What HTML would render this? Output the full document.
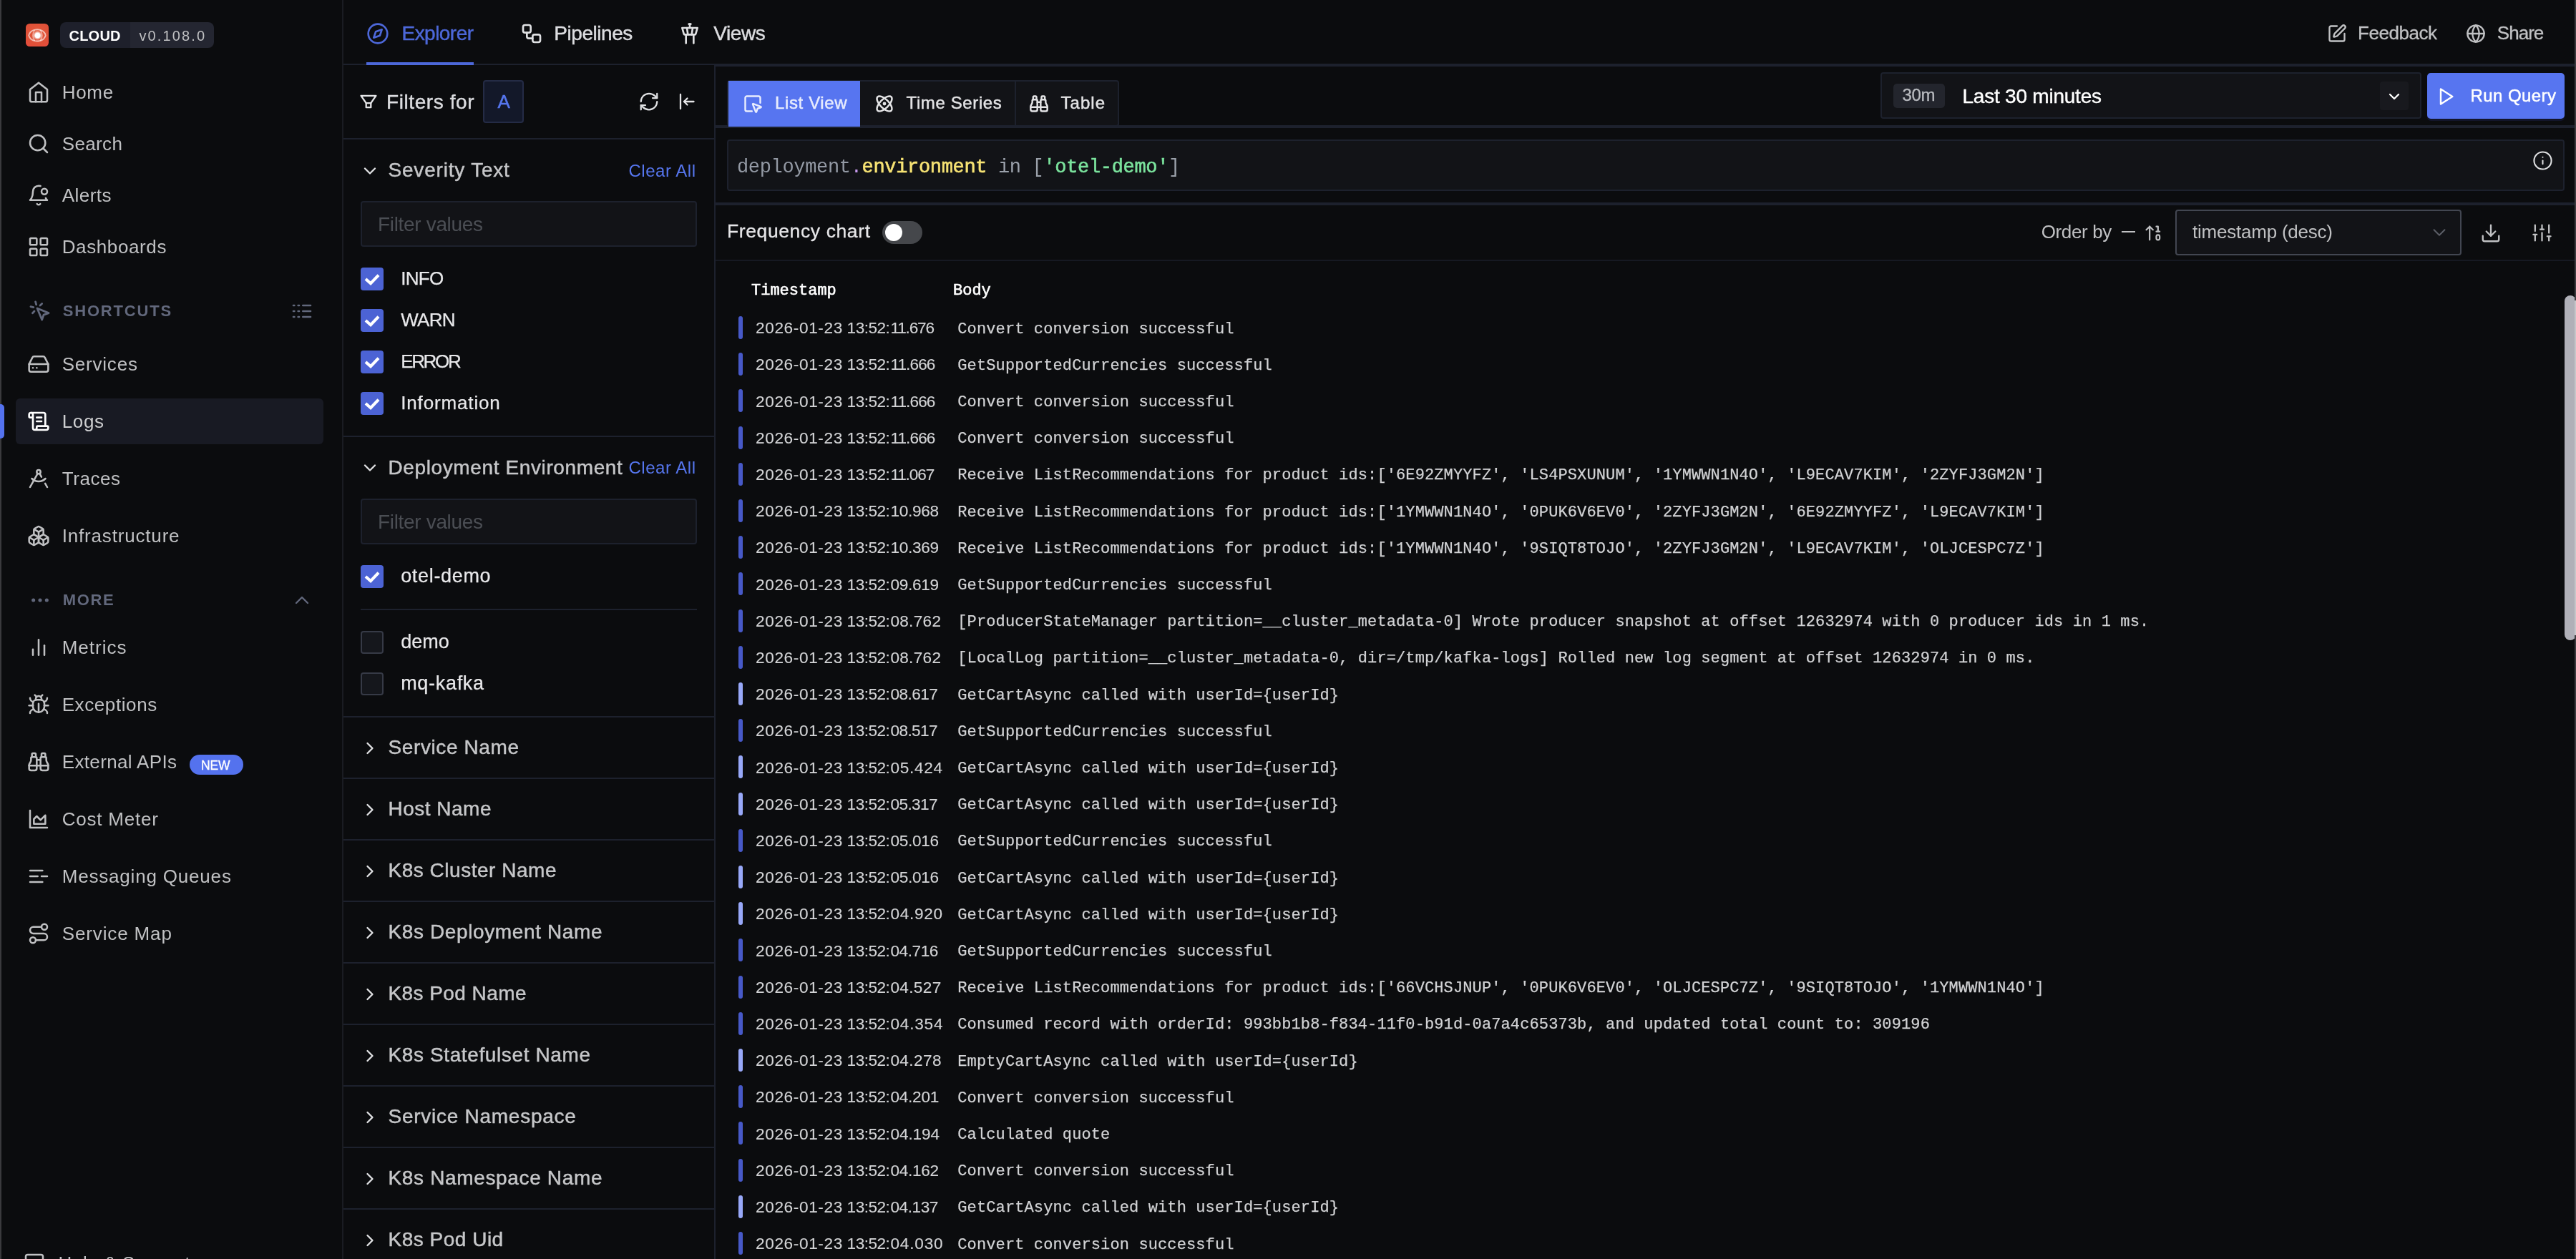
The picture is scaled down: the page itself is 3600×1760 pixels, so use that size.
<!DOCTYPE html>
<html><head><meta charset="utf-8"><title>SigNoz | Logs Explorer</title>
<style>
html,body{margin:0;padding:0;background:#0b0c0e;}
body{width:3600px;height:1760px;position:relative;overflow:hidden;font-family:"Liberation Sans",sans-serif;}
#root{position:absolute;left:0;top:0;width:3600px;height:1760px;will-change:transform;transform:translateZ(0);}
.a{position:absolute;}
.t{white-space:pre;}
.m{font-family:"Liberation Mono",monospace;}
svg{overflow:visible;}
</style></head><body><div id="root">
<div class="a" style="left:0px;top:0px;width:2px;height:1760px;background:#3a3a3d;"></div>
<div class="a" style="left:478px;top:0px;width:2px;height:1760px;background:#1a1c22;"></div>
<svg class="a" style="left:36px;top:33px" width="32" height="32" viewBox="0 0 32 32"><defs><radialGradient id="lg" cx="0.5" cy="0.4" r="0.8"><stop offset="0" stop-color="#e35a3a"/><stop offset="0.65" stop-color="#df5038"/><stop offset="1" stop-color="#ec4a40"/></radialGradient><filter id="bl" x="-30%" y="-30%" width="160%" height="160%"><feGaussianBlur stdDeviation="0.55"/></filter><filter id="bl2" x="-50%" y="-50%" width="200%" height="200%"><feGaussianBlur stdDeviation="0.9"/></filter></defs><rect width="32" height="32" rx="5.5" fill="url(#lg)"/><g filter="url(#bl)" fill="none" stroke="#fff" stroke-linecap="round"><path d="M4.2 16.4 C5.5 11 10.5 8.3 16 8.3 C21.5 8.3 26.5 11 27.8 16.4 C26.5 21.8 21.5 24.5 16 24.5 C10.5 24.5 5.5 21.8 4.2 16.4Z" stroke-opacity="0.62" stroke-width="1.9" stroke-dasharray="5 1.2"/><path d="M12.2 9.5 C9.2 13 9.2 19.8 12.2 23.3" stroke-opacity="0.45" stroke-width="1.7"/><path d="M20.6 9.5 C23.6 13 23.6 19.8 20.6 23.3" stroke-opacity="0.45" stroke-width="1.7"/></g><circle cx="16.5" cy="16.5" r="5" fill="#fff" filter="url(#bl2)"/><circle cx="16.5" cy="16.5" r="3.6" fill="#fff"/></svg>
<div class="a" style="left:84px;top:31px;width:98px;height:36px;background:#1e202b;border-radius:8px 0 0 8px;"></div>
<div class="a" style="left:182px;top:31px;width:117px;height:36px;background:#242631;border-radius:0 8px 8px 0;"></div>
<div class="a t" style="left:96.5px;top:35.70px;line-height:28px;font-size:20px;color:#ffffff;font-weight:700;letter-spacing:0.224px;">CLOUD</div>
<div class="a t" style="left:194.5px;top:35.70px;line-height:28px;font-size:20px;color:#c0c1c3;letter-spacing:2.110px;">v0.108.0</div>
<svg class="a" style="left:38px;top:112.5px;" width="32" height="32" viewBox="0 0 24 24" fill="none" stroke="#c0c1c3" stroke-width="1.9" stroke-linecap="round" stroke-linejoin="round"><path d="m3 9 9-7 9 7v11a2 2 0 0 1-2 2H5a2 2 0 0 1-2-2z"/><polyline points="9 22 9 12 15 12 15 22"/></svg>
<div class="a t" style="left:86.7px;top:110.70px;line-height:36px;font-size:26px;color:#c0c1c3;letter-spacing:0.714px;">Home</div>
<svg class="a" style="left:38px;top:184.5px;" width="32" height="32" viewBox="0 0 24 24" fill="none" stroke="#c0c1c3" stroke-width="1.9" stroke-linecap="round" stroke-linejoin="round"><circle cx="11" cy="11" r="8"/><path d="m21 21-4.3-4.3"/></svg>
<div class="a t" style="left:86.7px;top:182.70px;line-height:36px;font-size:26px;color:#c0c1c3;letter-spacing:0.363px;">Search</div>
<svg class="a" style="left:38px;top:256.5px;" width="32" height="32" viewBox="0 0 24 24" fill="none" stroke="#c0c1c3" stroke-width="1.9" stroke-linecap="round" stroke-linejoin="round"><path d="M19.4 14.9C20.2 16.4 21 17 21 17H3s3-2 3-9c0-3.3 2.7-6 6-6 .7 0 1.3.1 1.9.3"/><path d="M10.3 21a1.94 1.94 0 0 0 3.4 0"/><circle cx="18" cy="8" r="3"/></svg>
<div class="a t" style="left:86.7px;top:254.70px;line-height:36px;font-size:26px;color:#c0c1c3;letter-spacing:0.467px;">Alerts</div>
<svg class="a" style="left:38px;top:328.5px;" width="32" height="32" viewBox="0 0 24 24" fill="none" stroke="#c0c1c3" stroke-width="1.9" stroke-linecap="round" stroke-linejoin="round"><rect width="7" height="7" x="3" y="3" rx="1"/><rect width="7" height="7" x="14" y="3" rx="1"/><rect width="7" height="7" x="14" y="14" rx="1"/><rect width="7" height="7" x="3" y="14" rx="1"/></svg>
<div class="a t" style="left:86.7px;top:326.70px;line-height:36px;font-size:26px;color:#c0c1c3;letter-spacing:0.611px;">Dashboards</div>
<svg class="a" style="left:40px;top:418.5px;" width="32" height="32" viewBox="0 0 24 24" fill="none" stroke="#62687c" stroke-width="2.1" stroke-linecap="round" stroke-linejoin="round"><path d="m9 9 5 12 1.8-5.2L21 14Z"/><path d="M7.2 2.2 8 5.1"/><path d="m5.1 8-2.9-.8"/><path d="M14 4.1 12 6"/><path d="m6 12-1.9 2"/></svg>
<div class="a t" style="left:87.7px;top:418.80px;line-height:31px;font-size:22px;color:#62687c;font-weight:700;letter-spacing:1.826px;">SHORTCUTS</div>
<svg class="a" style="left:406.3px;top:419.2px;" width="32" height="32" viewBox="0 0 24 24" fill="none" stroke="#62687c" stroke-width="2" stroke-linecap="round" stroke-linejoin="round"><path d="M13 12h8"/><path d="M13 18h8"/><path d="M13 6h8"/><path d="M3 12h1"/><path d="M3 18h1"/><path d="M3 6h1"/><path d="M8 12h1"/><path d="M8 18h1"/><path d="M8 6h1"/></svg>
<svg class="a" style="left:38px;top:492.5px;" width="32" height="32" viewBox="0 0 24 24" fill="none" stroke="#c0c1c3" stroke-width="1.9" stroke-linecap="round" stroke-linejoin="round"><line x1="22" x2="2" y1="12" y2="12"/><path d="M5.45 5.11 2 12v6a2 2 0 0 0 2 2h16a2 2 0 0 0 2-2v-6l-3.45-6.89A2 2 0 0 0 16.76 4H7.24a2 2 0 0 0-1.79 1.11z"/><line x1="6" x2="6.01" y1="16" y2="16"/><line x1="10" x2="10.01" y1="16" y2="16"/></svg>
<div class="a t" style="left:86.7px;top:490.70px;line-height:36px;font-size:26px;color:#c0c1c3;letter-spacing:0.786px;">Services</div>
<div class="a" style="left:22px;top:557px;width:430px;height:64px;background:#181a23;border-radius:6px;"></div>
<div class="a" style="left:0px;top:565px;width:6px;height:48px;background:#5472ee;border-radius:0 5px 5px 0;"></div>
<svg class="a" style="left:38px;top:572.5px;" width="32" height="32" viewBox="0 0 24 24" fill="none" stroke="#ffffff" stroke-width="2" stroke-linecap="round" stroke-linejoin="round"><path d="M15 12h-5"/><path d="M15 8h-5"/><path d="M19 17V5a2 2 0 0 0-2-2H4"/><path d="M8 21h12a2 2 0 0 0 2-2v-1a1 1 0 0 0-1-1H11a1 1 0 0 0-1 1v1a2 2 0 1 1-4 0V5a2 2 0 1 0-4 0v2a1 1 0 0 0 1 1h3"/></svg>
<div class="a t" style="left:86.7px;top:570.70px;line-height:36px;font-size:26px;color:#cdced0;letter-spacing:0.640px;">Logs</div>
<svg class="a" style="left:38px;top:652.5px;" width="32" height="32" viewBox="0 0 24 24" fill="none" stroke="#c0c1c3" stroke-width="1.9" stroke-linecap="round" stroke-linejoin="round"><path d="m12.99 6.74 1.93 3.44"/><path d="M19.136 12a10 10 0 0 1-14.271 0"/><path d="m21 21-2.16-3.84"/><path d="m3 21 8.02-14.26"/><circle cx="12" cy="5" r="2"/></svg>
<div class="a t" style="left:86.7px;top:650.70px;line-height:36px;font-size:26px;color:#c0c1c3;letter-spacing:0.580px;">Traces</div>
<svg class="a" style="left:38px;top:732.5px;" width="32" height="32" viewBox="0 0 24 24" fill="none" stroke="#c0c1c3" stroke-width="1.9" stroke-linecap="round" stroke-linejoin="round"><path d="M2.97 12.92A2 2 0 0 0 2 14.63v3.24a2 2 0 0 0 .97 1.71l3 1.8a2 2 0 0 0 2.06 0L12 19v-5.5l-5-3-4.03 2.42Z"/><path d="m7 16.5-4.74-2.85"/><path d="m7 16.5 5-3"/><path d="M7 16.5v5.17"/><path d="M12 13.5V19l3.97 2.38a2 2 0 0 0 2.06 0l3-1.8a2 2 0 0 0 .97-1.71v-3.24a2 2 0 0 0-.97-1.71L17 10.5l-5 3Z"/><path d="m17 16.5-5-3"/><path d="m17 16.5 4.74-2.85"/><path d="M17 16.5v5.17"/><path d="M7.97 4.42A2 2 0 0 0 7 6.13v4.37l5 3 5-3V6.13a2 2 0 0 0-.97-1.71l-3-1.8a2 2 0 0 0-2.06 0l-3 1.8Z"/><path d="M12 8 7.26 5.15"/><path d="m12 8 4.74-2.85"/><path d="M12 13.5V8"/></svg>
<div class="a t" style="left:86.7px;top:730.70px;line-height:36px;font-size:26px;color:#c0c1c3;letter-spacing:0.825px;">Infrastructure</div>
<svg class="a" style="left:40px;top:823px;" width="32" height="32" viewBox="0 0 24 24" fill="none" stroke="#62687c" stroke-width="1.8" stroke-linecap="round" stroke-linejoin="round"><circle cx="12" cy="12" r="1"/><circle cx="19" cy="12" r="1"/><circle cx="5" cy="12" r="1"/></svg>
<div class="a t" style="left:87.7px;top:822.80px;line-height:31px;font-size:22px;color:#62687c;font-weight:700;letter-spacing:1.666px;">MORE</div>
<svg class="a" style="left:406px;top:823px;" width="32" height="32" viewBox="0 0 24 24" fill="none" stroke="#62687c" stroke-width="1.8" stroke-linecap="round" stroke-linejoin="round"><path d="m18 15-6-6-6 6"/></svg>
<svg class="a" style="left:38px;top:888.5px;" width="32" height="32" viewBox="0 0 24 24" fill="none" stroke="#c0c1c3" stroke-width="1.9" stroke-linecap="round" stroke-linejoin="round"><line x1="18" x2="18" y1="20" y2="10"/><line x1="12" x2="12" y1="20" y2="4"/><line x1="6" x2="6" y1="20" y2="14"/></svg>
<div class="a t" style="left:86.7px;top:886.70px;line-height:36px;font-size:26px;color:#c0c1c3;letter-spacing:1.004px;">Metrics</div>
<svg class="a" style="left:38px;top:968.5px;" width="32" height="32" viewBox="0 0 24 24" fill="none" stroke="#c0c1c3" stroke-width="1.9" stroke-linecap="round" stroke-linejoin="round"><path d="m8 2 1.88 1.88"/><path d="M14.12 3.88 16 2"/><path d="M9 7.13v-1a3.003 3.003 0 1 1 6 0v1"/><path d="M12 20c-3.3 0-6-2.7-6-6v-3a4 4 0 0 1 4-4h4a4 4 0 0 1 4 4v3c0 3.3-2.7 6-6 6"/><path d="M12 20v-9"/><path d="M6.53 9C4.6 8.8 3 7.1 3 5"/><path d="M6 13H2"/><path d="M3 21c0-2.1 1.7-3.9 3.8-4"/><path d="M20.97 5c0 2.1-1.6 3.8-3.5 4"/><path d="M22 13h-4"/><path d="M17.2 17c2.1.1 3.8 1.9 3.8 4"/></svg>
<div class="a t" style="left:86.7px;top:966.70px;line-height:36px;font-size:26px;color:#c0c1c3;letter-spacing:0.591px;">Exceptions</div>
<svg class="a" style="left:38px;top:1048.5px;" width="32" height="32" viewBox="0 0 24 24" fill="none" stroke="#c0c1c3" stroke-width="1.9" stroke-linecap="round" stroke-linejoin="round"><path d="M10 10h4"/><path d="M19 7V4a1 1 0 0 0-1-1h-2a1 1 0 0 0-1 1v3"/><path d="M20 21a2 2 0 0 0 2-2v-3.851c0-1.39-2-2.962-2-4.829V8a1 1 0 0 0-1-1h-4a1 1 0 0 0-1 1v11a2 2 0 0 0 2 2z"/><path d="M22 16H2"/><path d="M4 21a2 2 0 0 1-2-2v-3.851c0-1.39 2-2.962 2-4.829V8a1 1 0 0 1 1-1h4a1 1 0 0 1 1 1v11a2 2 0 0 1-2 2z"/><path d="M9 7V4a1 1 0 0 0-1-1H6a1 1 0 0 0-1 1v3"/></svg>
<div class="a t" style="left:86.7px;top:1046.70px;line-height:36px;font-size:26px;color:#c0c1c3;letter-spacing:0.360px;">External APIs</div>
<div class="a" style="left:265px;top:1055px;width:75px;height:28px;background:#5472ee;border-radius:14px;"></div>
<div class="a t" style="left:281px;top:1057.60px;line-height:24px;font-size:17.5px;color:#ffffff;letter-spacing:-0.164px;-webkit-text-stroke:0.3px #ffffff;">NEW</div>
<svg class="a" style="left:38px;top:1128.5px;" width="32" height="32" viewBox="0 0 24 24" fill="none" stroke="#c0c1c3" stroke-width="1.9" stroke-linecap="round" stroke-linejoin="round"><path d="M3 3v18h18"/><path d="M7 12v5h12V8l-5 5-4-4Z"/></svg>
<div class="a t" style="left:86.7px;top:1126.70px;line-height:36px;font-size:26px;color:#c0c1c3;letter-spacing:0.784px;">Cost Meter</div>
<svg class="a" style="left:38px;top:1208.5px;" width="32" height="32" viewBox="0 0 24 24" fill="none" stroke="#c0c1c3" stroke-width="1.9" stroke-linecap="round" stroke-linejoin="round"><path d="M11 12H3"/><path d="M16 6H3"/><path d="M16 18H3"/><path d="M21 12h-6"/></svg>
<div class="a t" style="left:86.7px;top:1206.70px;line-height:36px;font-size:26px;color:#c0c1c3;letter-spacing:0.812px;">Messaging Queues</div>
<svg class="a" style="left:38px;top:1288.5px;" width="32" height="32" viewBox="0 0 24 24" fill="none" stroke="#c0c1c3" stroke-width="1.9" stroke-linecap="round" stroke-linejoin="round"><circle cx="6" cy="19" r="3"/><path d="M9 19h8.5a3.5 3.5 0 0 0 0-7h-11a3.5 3.5 0 0 1 0-7H15"/><circle cx="18" cy="5" r="3"/></svg>
<div class="a t" style="left:86.7px;top:1286.70px;line-height:36px;font-size:26px;color:#c0c1c3;letter-spacing:0.870px;">Service Map</div>
<svg class="a" style="left:31.7px;top:1750.3px;" width="32" height="32" viewBox="0 0 24 24" fill="none" stroke="#c0c1c3" stroke-width="1.9" stroke-linecap="round" stroke-linejoin="round"><path d="M21 15a2 2 0 0 1-2 2H7l-4 4V5a2 2 0 0 1 2-2h14a2 2 0 0 1 2 2z"/></svg>
<div class="a t" style="left:81.5px;top:1748.00px;line-height:36px;font-size:26px;color:#c0c1c3;letter-spacing:0.590px;">Help &amp; Support</div>
<div class="a" style="left:480px;top:89px;width:3120px;height:2px;background:#1d212d;"></div>
<svg class="a" style="left:512px;top:31px;" width="32" height="32" viewBox="0 0 24 24" fill="none" stroke="#4d68d9" stroke-width="2" stroke-linecap="round" stroke-linejoin="round"><path d="m16.24 7.76-2.12 6.36-6.36 2.12 2.12-6.36 6.36-2.12z"/><circle cx="12" cy="12" r="10"/></svg>
<div class="a t" style="left:561.5px;top:27.00px;line-height:39px;font-size:28px;color:#4d68d9;letter-spacing:-0.538px;-webkit-text-stroke:0.45px #4d68d9;">Explorer</div>
<div class="a" style="left:512px;top:87px;width:150px;height:4px;background:#4d68d9;"></div>
<svg class="a" style="left:727px;top:31px;" width="32" height="32" viewBox="0 0 24 24" fill="none" stroke="#e0e1e3" stroke-width="2" stroke-linecap="round" stroke-linejoin="round"><rect width="8" height="8" x="3" y="3" rx="2"/><path d="M7 11v4a2 2 0 0 0 2 2h4"/><rect width="8" height="8" x="13" y="13" rx="2"/></svg>
<div class="a t" style="left:774.3px;top:27.00px;line-height:39px;font-size:28px;color:#dcdde0;letter-spacing:-0.454px;-webkit-text-stroke:0.45px #dcdde0;">Pipelines</div>
<svg class="a" style="left:948px;top:31px;" width="32" height="32" viewBox="0 0 24 24" fill="none" stroke="#e0e1e3" stroke-width="2" stroke-linecap="round" stroke-linejoin="round"><path d="M18.2 12.27 20 6H4l1.8 6.27a1 1 0 0 0 .95.73h10.5a1 1 0 0 0 .96-.73Z"/><path d="M8 13v9"/><path d="M16 22v-9"/><path d="m9 6 1 7"/><path d="m15 6-1 7"/><path d="M12 6V2"/><path d="M13 2h-2"/></svg>
<div class="a t" style="left:997.3px;top:27.00px;line-height:39px;font-size:28px;color:#dcdde0;letter-spacing:-0.447px;-webkit-text-stroke:0.45px #dcdde0;">Views</div>
<svg class="a" style="left:3251.7px;top:32.8px;" width="28" height="28" viewBox="0 0 24 24" fill="none" stroke="#c0c1c3" stroke-width="2" stroke-linecap="round" stroke-linejoin="round"><path d="M12 3H5a2 2 0 0 0-2 2v14a2 2 0 0 0 2 2h14a2 2 0 0 0 2-2v-7"/><path d="M18.375 2.625a1 1 0 0 1 3 3l-9.013 9.014a2 2 0 0 1-.853.505l-2.873.84a.5.5 0 0 1-.62-.62l.84-2.873a2 2 0 0 1 .506-.852z"/></svg>
<div class="a t" style="left:3295px;top:28.00px;line-height:36px;font-size:26px;color:#c0c1c3;letter-spacing:-0.455px;-webkit-text-stroke:0.3px #c0c1c3;">Feedback</div>
<svg class="a" style="left:3446.1px;top:32.8px;" width="28" height="28" viewBox="0 0 24 24" fill="none" stroke="#c0c1c3" stroke-width="2" stroke-linecap="round" stroke-linejoin="round"><circle cx="12" cy="12" r="10"/><path d="M12 2a14.5 14.5 0 0 0 0 20 14.5 14.5 0 0 0 0-20"/><path d="M2 12h20"/></svg>
<div class="a t" style="left:3489.8px;top:28.00px;line-height:36px;font-size:26px;color:#c0c1c3;letter-spacing:-0.971px;-webkit-text-stroke:0.3px #c0c1c3;">Share</div>
<div class="a" style="left:998px;top:91px;width:2px;height:1669px;background:#1d212d;"></div>
<div class="a" style="left:480px;top:193px;width:518px;height:2px;background:#1d212d;"></div>
<svg class="a" style="left:503px;top:132px" width="24" height="20" viewBox="0 0 24 20" fill="none" stroke="#e6e6e8" stroke-width="2.3" stroke-linejoin="round" stroke-linecap="round"><path d="M1.6 1.8H22.4L15.3 12.2V18.2H8.7V12.2Z"/><path d="M8.7 12.2H15.3"/></svg>
<div class="a t" style="left:540px;top:122.50px;line-height:39px;font-size:28px;color:#dcdde0;letter-spacing:0.582px;-webkit-text-stroke:0.45px #dcdde0;">Filters for</div>
<div class="a" style="left:675px;top:112px;width:57px;height:60px;background:#131829;border:2px solid #242b45;border-radius:4px;box-sizing:border-box;"></div>
<div class="a t" style="left:695.5px;top:124.00px;line-height:36px;font-size:26px;color:#5676ee;-webkit-text-stroke:0.5px #5676ee;">A</div>
<svg class="a" style="left:892px;top:127px;" width="30" height="30" viewBox="0 0 24 24" fill="none" stroke="#e0e1e3" stroke-width="1.8" stroke-linecap="round" stroke-linejoin="round"><path d="M3 12a9 9 0 0 1 9-9 9.75 9.75 0 0 1 6.74 2.74L21 8"/><path d="M21 3v5h-5"/><path d="M21 12a9 9 0 0 1-9 9 9.75 9.75 0 0 1-6.74-2.74L3 16"/><path d="M8 16H3v5"/></svg>
<svg class="a" style="left:948px;top:130px" width="24" height="24" viewBox="0 0 24 24" fill="none" stroke="#e6e6e8" stroke-width="2.3" stroke-linecap="round" stroke-linejoin="round"><path d="M3 2V22"/><path d="M8 12H21.5"/><path d="M12.5 7.5L8 12L12.5 16.5"/></svg>
<svg class="a" style="left:503px;top:224.5px;" width="28" height="28" viewBox="0 0 24 24" fill="none" stroke="#e0e1e3" stroke-width="2" stroke-linecap="round" stroke-linejoin="round"><path d="m6 9 6 6 6-6"/></svg>
<div class="a t" style="left:542.5px;top:218.20px;line-height:39px;font-size:28px;color:#c6c7c9;letter-spacing:0.802px;-webkit-text-stroke:0.45px #c6c7c9;">Severity Text</div>
<div class="a t" style="left:878.5px;top:221.50px;line-height:34px;font-size:24px;color:#5676ee;letter-spacing:0.516px;">Clear All</div>
<div class="a" style="left:504px;top:281px;width:470px;height:64px;background:#121317;border:2px solid #1d212d;border-radius:4px;box-sizing:border-box;"></div>
<div class="a t" style="left:528px;top:294.00px;line-height:39px;font-size:28px;color:#4b4e54;letter-spacing:-0.328px;">Filter values</div>
<div class="a" style="left:504px;top:374px;width:32px;height:32px;background:#4c63d4;border-radius:4px;"></div>
<svg class="a" style="left:504px;top:374px" width="32" height="32" viewBox="0 0 32 32" fill="none" stroke="#fff" stroke-width="4.2" stroke-linecap="butt" stroke-linejoin="miter"><path d="M7 16 L14 22.2 L25 10.6"/></svg>
<div class="a t" style="left:560.2px;top:371.00px;line-height:36px;font-size:26px;color:#e8e8ea;letter-spacing:-0.702px;-webkit-text-stroke:0.25px #e8e8ea;">INFO</div>
<div class="a" style="left:504px;top:432px;width:32px;height:32px;background:#4c63d4;border-radius:4px;"></div>
<svg class="a" style="left:504px;top:432px" width="32" height="32" viewBox="0 0 32 32" fill="none" stroke="#fff" stroke-width="4.2" stroke-linecap="butt" stroke-linejoin="miter"><path d="M7 16 L14 22.2 L25 10.6"/></svg>
<div class="a t" style="left:560.2px;top:429.00px;line-height:36px;font-size:26px;color:#e8e8ea;letter-spacing:-0.690px;-webkit-text-stroke:0.25px #e8e8ea;">WARN</div>
<div class="a" style="left:504px;top:490px;width:32px;height:32px;background:#4c63d4;border-radius:4px;"></div>
<svg class="a" style="left:504px;top:490px" width="32" height="32" viewBox="0 0 32 32" fill="none" stroke="#fff" stroke-width="4.2" stroke-linecap="butt" stroke-linejoin="miter"><path d="M7 16 L14 22.2 L25 10.6"/></svg>
<div class="a t" style="left:560.2px;top:487.00px;line-height:36px;font-size:26px;color:#e8e8ea;letter-spacing:-2.349px;-webkit-text-stroke:0.25px #e8e8ea;">ERROR</div>
<div class="a" style="left:504px;top:548px;width:32px;height:32px;background:#4c63d4;border-radius:4px;"></div>
<svg class="a" style="left:504px;top:548px" width="32" height="32" viewBox="0 0 32 32" fill="none" stroke="#fff" stroke-width="4.2" stroke-linecap="butt" stroke-linejoin="miter"><path d="M7 16 L14 22.2 L25 10.6"/></svg>
<div class="a t" style="left:560.2px;top:545.00px;line-height:36px;font-size:26px;color:#e8e8ea;letter-spacing:0.853px;-webkit-text-stroke:0.25px #e8e8ea;">Information</div>
<div class="a" style="left:480px;top:609px;width:518px;height:2px;background:#1d212d;"></div>
<svg class="a" style="left:503px;top:640px;" width="28" height="28" viewBox="0 0 24 24" fill="none" stroke="#e0e1e3" stroke-width="2" stroke-linecap="round" stroke-linejoin="round"><path d="m6 9 6 6 6-6"/></svg>
<div class="a t" style="left:542.5px;top:633.70px;line-height:39px;font-size:28px;color:#c6c7c9;letter-spacing:0.615px;-webkit-text-stroke:0.45px #c6c7c9;">Deployment Environment</div>
<div class="a t" style="left:878.5px;top:637.00px;line-height:34px;font-size:24px;color:#5676ee;letter-spacing:0.516px;">Clear All</div>
<div class="a" style="left:504px;top:697px;width:470px;height:64px;background:#121317;border:2px solid #1d212d;border-radius:4px;box-sizing:border-box;"></div>
<div class="a t" style="left:528px;top:710.00px;line-height:39px;font-size:28px;color:#4b4e54;letter-spacing:-0.328px;">Filter values</div>
<div class="a" style="left:504px;top:790px;width:32px;height:32px;background:#4c63d4;border-radius:4px;"></div>
<svg class="a" style="left:504px;top:790px" width="32" height="32" viewBox="0 0 32 32" fill="none" stroke="#fff" stroke-width="4.2" stroke-linecap="butt" stroke-linejoin="miter"><path d="M7 16 L14 22.2 L25 10.6"/></svg>
<div class="a t" style="left:560.2px;top:786.00px;line-height:38px;font-size:27px;color:#e8e8ea;letter-spacing:0.667px;-webkit-text-stroke:0.25px #e8e8ea;">otel-demo</div>
<div class="a" style="left:504px;top:851px;width:470px;height:2px;background:#1d212d;"></div>
<div class="a" style="left:504px;top:882px;width:32px;height:32px;background:#15171c;border:2px solid #363a46;border-radius:4px;box-sizing:border-box;"></div>
<div class="a t" style="left:560.2px;top:878.00px;line-height:38px;font-size:27px;color:#e8e8ea;letter-spacing:0.053px;-webkit-text-stroke:0.25px #e8e8ea;">demo</div>
<div class="a" style="left:504px;top:940px;width:32px;height:32px;background:#15171c;border:2px solid #363a46;border-radius:4px;box-sizing:border-box;"></div>
<div class="a t" style="left:560.2px;top:936.00px;line-height:38px;font-size:27px;color:#e8e8ea;letter-spacing:0.695px;-webkit-text-stroke:0.25px #e8e8ea;">mq-kafka</div>
<div class="a" style="left:480px;top:1001px;width:518px;height:2px;background:#1d212d;"></div>
<svg class="a" style="left:503px;top:1031.5px;" width="28" height="28" viewBox="0 0 24 24" fill="none" stroke="#e0e1e3" stroke-width="2" stroke-linecap="round" stroke-linejoin="round"><path d="m9 18 6-6-6-6"/></svg>
<div class="a t" style="left:542.5px;top:1024.90px;line-height:39px;font-size:28px;color:#c6c7c9;letter-spacing:0.605px;-webkit-text-stroke:0.45px #c6c7c9;">Service Name</div>
<div class="a" style="left:480px;top:1087px;width:518px;height:2px;background:#1d212d;"></div>
<svg class="a" style="left:503px;top:1117.5px;" width="28" height="28" viewBox="0 0 24 24" fill="none" stroke="#e0e1e3" stroke-width="2" stroke-linecap="round" stroke-linejoin="round"><path d="m9 18 6-6-6-6"/></svg>
<div class="a t" style="left:542.5px;top:1110.90px;line-height:39px;font-size:28px;color:#c6c7c9;letter-spacing:0.495px;-webkit-text-stroke:0.45px #c6c7c9;">Host Name</div>
<div class="a" style="left:480px;top:1173px;width:518px;height:2px;background:#1d212d;"></div>
<svg class="a" style="left:503px;top:1203.5px;" width="28" height="28" viewBox="0 0 24 24" fill="none" stroke="#e0e1e3" stroke-width="2" stroke-linecap="round" stroke-linejoin="round"><path d="m9 18 6-6-6-6"/></svg>
<div class="a t" style="left:542.5px;top:1196.90px;line-height:39px;font-size:28px;color:#c6c7c9;letter-spacing:0.521px;-webkit-text-stroke:0.45px #c6c7c9;">K8s Cluster Name</div>
<div class="a" style="left:480px;top:1259px;width:518px;height:2px;background:#1d212d;"></div>
<svg class="a" style="left:503px;top:1289.5px;" width="28" height="28" viewBox="0 0 24 24" fill="none" stroke="#e0e1e3" stroke-width="2" stroke-linecap="round" stroke-linejoin="round"><path d="m9 18 6-6-6-6"/></svg>
<div class="a t" style="left:542.5px;top:1282.90px;line-height:39px;font-size:28px;color:#c6c7c9;letter-spacing:0.616px;-webkit-text-stroke:0.45px #c6c7c9;">K8s Deployment Name</div>
<div class="a" style="left:480px;top:1345px;width:518px;height:2px;background:#1d212d;"></div>
<svg class="a" style="left:503px;top:1375.5px;" width="28" height="28" viewBox="0 0 24 24" fill="none" stroke="#e0e1e3" stroke-width="2" stroke-linecap="round" stroke-linejoin="round"><path d="m9 18 6-6-6-6"/></svg>
<div class="a t" style="left:542.5px;top:1368.90px;line-height:39px;font-size:28px;color:#c6c7c9;letter-spacing:0.425px;-webkit-text-stroke:0.45px #c6c7c9;">K8s Pod Name</div>
<div class="a" style="left:480px;top:1431px;width:518px;height:2px;background:#1d212d;"></div>
<svg class="a" style="left:503px;top:1461.5px;" width="28" height="28" viewBox="0 0 24 24" fill="none" stroke="#e0e1e3" stroke-width="2" stroke-linecap="round" stroke-linejoin="round"><path d="m9 18 6-6-6-6"/></svg>
<div class="a t" style="left:542.5px;top:1454.90px;line-height:39px;font-size:28px;color:#c6c7c9;letter-spacing:0.616px;-webkit-text-stroke:0.45px #c6c7c9;">K8s Statefulset Name</div>
<div class="a" style="left:480px;top:1517px;width:518px;height:2px;background:#1d212d;"></div>
<svg class="a" style="left:503px;top:1547.5px;" width="28" height="28" viewBox="0 0 24 24" fill="none" stroke="#e0e1e3" stroke-width="2" stroke-linecap="round" stroke-linejoin="round"><path d="m9 18 6-6-6-6"/></svg>
<div class="a t" style="left:542.5px;top:1540.90px;line-height:39px;font-size:28px;color:#c6c7c9;letter-spacing:0.734px;-webkit-text-stroke:0.45px #c6c7c9;">Service Namespace</div>
<div class="a" style="left:480px;top:1603px;width:518px;height:2px;background:#1d212d;"></div>
<svg class="a" style="left:503px;top:1633.5px;" width="28" height="28" viewBox="0 0 24 24" fill="none" stroke="#e0e1e3" stroke-width="2" stroke-linecap="round" stroke-linejoin="round"><path d="m9 18 6-6-6-6"/></svg>
<div class="a t" style="left:542.5px;top:1626.90px;line-height:39px;font-size:28px;color:#c6c7c9;letter-spacing:0.652px;-webkit-text-stroke:0.45px #c6c7c9;">K8s Namespace Name</div>
<div class="a" style="left:480px;top:1689px;width:518px;height:2px;background:#1d212d;"></div>
<svg class="a" style="left:503px;top:1719.5px;" width="28" height="28" viewBox="0 0 24 24" fill="none" stroke="#e0e1e3" stroke-width="2" stroke-linecap="round" stroke-linejoin="round"><path d="m9 18 6-6-6-6"/></svg>
<div class="a t" style="left:542.5px;top:1712.90px;line-height:39px;font-size:28px;color:#c6c7c9;letter-spacing:0.505px;-webkit-text-stroke:0.45px #c6c7c9;">K8s Pod Uid</div>
<div class="a" style="left:1000px;top:91px;width:2600px;height:2px;background:#1d212d;"></div>
<div class="a" style="left:1000px;top:175px;width:2600px;height:4px;background:#1d212d;"></div>
<div class="a" style="left:1000px;top:283px;width:2600px;height:4px;background:#1d212d;"></div>
<div class="a" style="left:1000px;top:363px;width:2600px;height:2px;background:#161922;"></div>
<div class="a" style="left:1016px;top:112px;width:548px;height:65px;background:#121317;border:2px solid #1d212d;border-radius:4px;box-sizing:border-box;"></div>
<div class="a" style="left:1018px;top:113px;width:184px;height:64px;background:#5775f0;"></div>
<svg class="a" style="left:1038px;top:131px;" width="28" height="28" viewBox="0 0 24 24" fill="none" stroke="#e8ecfd" stroke-width="2.1" stroke-linecap="round" stroke-linejoin="round"><path d="M12.034 12.681a.498.498 0 0 1 .647-.647l9 3.5a.5.5 0 0 1-.033.943l-3.444 1.068a1 1 0 0 0-.66.66l-1.067 3.443a.5.5 0 0 1-.943.033z"/><path d="M21 11V5a2 2 0 0 0-2-2H5a2 2 0 0 0-2 2v14a2 2 0 0 0 2 2h6"/></svg>
<div class="a t" style="left:1083px;top:127.00px;line-height:34px;font-size:24px;color:#e8ecfd;letter-spacing:0.624px;-webkit-text-stroke:0.45px #e8ecfd;">List View</div>
<div class="a" style="left:1418px;top:114px;width:2px;height:61px;background:#1d212d;"></div>
<svg class="a" style="left:1222px;top:131px;" width="28" height="28" viewBox="0 0 24 24" fill="none" stroke="#e4e4e6" stroke-width="2.1" stroke-linecap="round" stroke-linejoin="round"><circle cx="12" cy="12" r="1"/><path d="M20.2 20.2c2.04-2.03.02-7.36-4.5-11.9-4.54-4.52-9.87-6.54-11.9-4.5-2.04 2.03-.02 7.36 4.5 11.9 4.54 4.52 9.87 6.54 11.9 4.5Z"/><path d="M15.7 15.7c4.52-4.54 6.54-9.87 4.5-11.9-2.03-2.04-7.36-.02-11.9 4.5-4.52 4.54-6.54 9.87-4.5 11.9 2.03 2.04 7.36.02 11.9-4.5Z"/></svg>
<div class="a t" style="left:1266.5px;top:127.00px;line-height:34px;font-size:24px;color:#e4e4e6;letter-spacing:0.616px;-webkit-text-stroke:0.45px #e4e4e6;">Time Series</div>
<svg class="a" style="left:1438px;top:131px;" width="28" height="28" viewBox="0 0 24 24" fill="none" stroke="#e4e4e6" stroke-width="2.1" stroke-linecap="round" stroke-linejoin="round"><path d="M10 10h4"/><path d="M19 7V4a1 1 0 0 0-1-1h-2a1 1 0 0 0-1 1v3"/><path d="M20 21a2 2 0 0 0 2-2v-3.851c0-1.39-2-2.962-2-4.829V8a1 1 0 0 0-1-1h-4a1 1 0 0 0-1 1v11a2 2 0 0 0 2 2z"/><path d="M22 16H2"/><path d="M4 21a2 2 0 0 1-2-2v-3.851c0-1.39 2-2.962 2-4.829V8a1 1 0 0 1 1-1h4a1 1 0 0 1 1 1v11a2 2 0 0 1-2 2z"/><path d="M9 7V4a1 1 0 0 0-1-1H6a1 1 0 0 0-1 1v3"/></svg>
<div class="a t" style="left:1482.5px;top:127.00px;line-height:34px;font-size:24px;color:#e4e4e6;letter-spacing:1.031px;-webkit-text-stroke:0.45px #e4e4e6;">Table</div>
<div class="a" style="left:2628px;top:101px;width:756px;height:65px;background:#121317;border:2px solid #1d212d;border-radius:4px;box-sizing:border-box;"></div>
<div class="a" style="left:2646px;top:117px;width:72px;height:34px;background:#23252d;border-radius:5px;"></div>
<div class="a t" style="left:2658.5px;top:116.00px;line-height:34px;font-size:24px;color:#b8babf;letter-spacing:-0.345px;-webkit-text-stroke:0.3px #b8babf;">30m</div>
<div class="a t" style="left:2742.5px;top:114.50px;line-height:39px;font-size:28px;color:#ffffff;letter-spacing:-0.227px;-webkit-text-stroke:0.4px #ffffff;">Last 30 minutes</div>
<div class="a" style="left:3326px;top:114px;width:40px;height:40px;background:#18191e;border-radius:4px;"></div>
<svg class="a" style="left:3334px;top:123px;" width="24" height="24" viewBox="0 0 24 24" fill="none" stroke="#ffffff" stroke-width="2.3" stroke-linecap="round" stroke-linejoin="round"><path d="m6 9 6 6 6-6"/></svg>
<div class="a" style="left:3392px;top:102px;width:192px;height:64px;background:#5775f0;border-radius:5px;box-shadow:0 3px 0 #12152a;"></div>
<svg class="a" style="left:3404px;top:121px;" width="28" height="28" viewBox="0 0 24 24" fill="none" stroke="#ffffff" stroke-width="2.1" stroke-linecap="round" stroke-linejoin="round"><polygon points="6 3 20 12 6 21 6 3"/></svg>
<div class="a t" style="left:3452.5px;top:117.30px;line-height:34px;font-size:24px;color:#ffffff;letter-spacing:0.431px;-webkit-text-stroke:0.5px #ffffff;">Run Query</div>
<div class="a" style="left:1016px;top:195px;width:2568px;height:72px;background:#121317;border:2px solid #1d212d;border-radius:4px;box-sizing:border-box;"></div>
<div class="a t m" style="left:1030.0px;top:214.60px;line-height:38px;font-size:27px;color:#9399a4;letter-spacing:-0.333px;">deployment</div>
<div class="a t m" style="left:1188.7px;top:214.60px;line-height:38px;font-size:27px;color:#c99bf0;letter-spacing:-0.333px;">.</div>
<div class="a t m" style="left:1204.57px;top:214.60px;line-height:38px;font-size:27px;color:#f7e374;letter-spacing:-0.333px;-webkit-text-stroke:0.55px #f7e374;">environment</div>
<div class="a t m" style="left:1395.01px;top:214.60px;line-height:38px;font-size:27px;color:#9ba1ab;letter-spacing:-0.333px;">in</div>
<div class="a t m" style="left:1442.62px;top:214.60px;line-height:38px;font-size:27px;color:#9ba1ab;letter-spacing:-0.333px;">[</div>
<div class="a t m" style="left:1458.49px;top:214.60px;line-height:38px;font-size:27px;color:#7be39d;letter-spacing:-0.333px;-webkit-text-stroke:0.55px #7be39d;">&#x27;otel-demo&#x27;</div>
<div class="a t m" style="left:1633.06px;top:214.60px;line-height:38px;font-size:27px;color:#9ba1ab;letter-spacing:-0.333px;">]</div>
<svg class="a" style="left:3539px;top:210px;" width="29" height="29" viewBox="0 0 24 24" fill="none" stroke="#e0e1e3" stroke-width="1.7" stroke-linecap="round" stroke-linejoin="round"><circle cx="12" cy="12" r="10"/><path d="M12 16v-4"/><path d="M12 8h.01"/></svg>
<div class="a t" style="left:1016px;top:305.30px;line-height:37px;font-size:26.5px;color:#e6e6e8;letter-spacing:0.608px;-webkit-text-stroke:0.3px #e6e6e8;">Frequency chart</div>
<div class="a" style="left:1233px;top:309px;width:56px;height:32px;background:#45474b;border-radius:16px;"></div>
<div class="a" style="left:1237px;top:313px;width:24px;height:24px;background:#ffffff;border-radius:12px;"></div>
<div class="a t" style="left:2852.7px;top:306.00px;line-height:36px;font-size:26px;color:#c0c1c3;letter-spacing:-0.364px;">Order by</div>
<div class="a" style="left:2965px;top:323px;width:19px;height:2px;background:#c0c1c3;"></div>
<svg class="a" style="left:2996px;top:311.5px;" width="28" height="28" viewBox="0 0 24 24" fill="none" stroke="#c0c1c3" stroke-width="1.9" stroke-linecap="round" stroke-linejoin="round"><path d="m3 8 4-4 4 4"/><path d="M7 4v16"/><path d="M17 10V4h-2"/><path d="M15 10h4"/><rect x="15" y="14" width="4" height="6" ry="2"/></svg>
<div class="a" style="left:3040px;top:293px;width:400px;height:64px;background:#121317;border:2px solid #424651;border-radius:4px;box-sizing:border-box;"></div>
<div class="a t" style="left:3064px;top:305.50px;line-height:36px;font-size:26px;color:#c0c1c3;letter-spacing:-0.226px;">timestamp (desc)</div>
<svg class="a" style="left:3393.5px;top:310.3px;" width="30" height="30" viewBox="0 0 24 24" fill="none" stroke="#5c5f68" stroke-width="1.5" stroke-linecap="round" stroke-linejoin="round"><path d="m6 9 6 6 6-6"/></svg>
<svg class="a" style="left:3466px;top:311px;" width="30" height="30" viewBox="0 0 24 24" fill="none" stroke="#c0c1c3" stroke-width="1.9" stroke-linecap="round" stroke-linejoin="round"><path d="M21 15v4a2 2 0 0 1-2 2H5a2 2 0 0 1-2-2v-4"/><polyline points="7 10 12 15 17 10"/><line x1="12" x2="12" y1="15" y2="3"/></svg>
<svg class="a" style="left:3537.5px;top:311px;" width="29" height="29" viewBox="0 0 24 24" fill="none" stroke="#c0c1c3" stroke-width="1.9" stroke-linecap="round" stroke-linejoin="round"><line x1="4" x2="4" y1="21" y2="14"/><line x1="4" x2="4" y1="10" y2="3"/><line x1="12" x2="12" y1="21" y2="12"/><line x1="12" x2="12" y1="8" y2="3"/><line x1="20" x2="20" y1="21" y2="16"/><line x1="20" x2="20" y1="12" y2="3"/><line x1="2" x2="6" y1="14" y2="14"/><line x1="10" x2="14" y1="8" y2="8"/><line x1="18" x2="22" y1="16" y2="16"/></svg>
<div class="a t m" style="left:1050px;top:390.50px;line-height:31px;font-size:22px;color:#ffffff;-webkit-text-stroke:0.6px #ffffff;">Timestamp</div>
<div class="a t m" style="left:1332px;top:390.50px;line-height:31px;font-size:22px;color:#ffffff;-webkit-text-stroke:0.6px #ffffff;">Body</div>
<div class="a" style="left:1032px;top:442px;width:6px;height:32px;background:#4759c8;border-radius:3px;"></div>
<div class="a t" style="left:1056.0px;top:443.10px;line-height:32px;font-size:22.6px;color:#d2d3d5;letter-spacing:0.632px;-webkit-text-stroke:0.15px #d2d3d5;">2026-01-23</div>
<div class="a t" style="left:1183.6px;top:443.10px;line-height:32px;font-size:22.6px;color:#d2d3d5;letter-spacing:-0.507px;-webkit-text-stroke:0.15px #d2d3d5;">13:52:</div>
<div class="a t" style="left:1244.4px;top:443.10px;line-height:32px;font-size:22.6px;color:#d2d3d5;letter-spacing:-1.150px;-webkit-text-stroke:0.15px #d2d3d5;">11.676</div>
<div class="a t m" style="left:1338.3px;top:444.60px;line-height:31px;font-size:22px;color:#d2d3d5;letter-spacing:0.118px;-webkit-text-stroke:0.25px #d2d3d5;">Convert conversion successful</div>
<div class="a" style="left:1032px;top:493px;width:6px;height:32px;background:#4759c8;border-radius:3px;"></div>
<div class="a t" style="left:1056.0px;top:494.30px;line-height:32px;font-size:22.6px;color:#d2d3d5;letter-spacing:0.632px;-webkit-text-stroke:0.15px #d2d3d5;">2026-01-23</div>
<div class="a t" style="left:1183.6px;top:494.30px;line-height:32px;font-size:22.6px;color:#d2d3d5;letter-spacing:-0.507px;-webkit-text-stroke:0.15px #d2d3d5;">13:52:</div>
<div class="a t" style="left:1244.4px;top:494.30px;line-height:32px;font-size:22.6px;color:#d2d3d5;letter-spacing:-0.890px;-webkit-text-stroke:0.15px #d2d3d5;">11.666</div>
<div class="a t m" style="left:1338.3px;top:495.80px;line-height:31px;font-size:22px;color:#d2d3d5;letter-spacing:0.118px;-webkit-text-stroke:0.25px #d2d3d5;">GetSupportedCurrencies successful</div>
<div class="a" style="left:1032px;top:544px;width:6px;height:32px;background:#4759c8;border-radius:3px;"></div>
<div class="a t" style="left:1056.0px;top:545.50px;line-height:32px;font-size:22.6px;color:#d2d3d5;letter-spacing:0.632px;-webkit-text-stroke:0.15px #d2d3d5;">2026-01-23</div>
<div class="a t" style="left:1183.6px;top:545.50px;line-height:32px;font-size:22.6px;color:#d2d3d5;letter-spacing:-0.507px;-webkit-text-stroke:0.15px #d2d3d5;">13:52:</div>
<div class="a t" style="left:1244.4px;top:545.50px;line-height:32px;font-size:22.6px;color:#d2d3d5;letter-spacing:-0.890px;-webkit-text-stroke:0.15px #d2d3d5;">11.666</div>
<div class="a t m" style="left:1338.3px;top:547.00px;line-height:31px;font-size:22px;color:#d2d3d5;letter-spacing:0.118px;-webkit-text-stroke:0.25px #d2d3d5;">Convert conversion successful</div>
<div class="a" style="left:1032px;top:596px;width:6px;height:32px;background:#4759c8;border-radius:3px;"></div>
<div class="a t" style="left:1056.0px;top:596.70px;line-height:32px;font-size:22.6px;color:#d2d3d5;letter-spacing:0.632px;-webkit-text-stroke:0.15px #d2d3d5;">2026-01-23</div>
<div class="a t" style="left:1183.6px;top:596.70px;line-height:32px;font-size:22.6px;color:#d2d3d5;letter-spacing:-0.507px;-webkit-text-stroke:0.15px #d2d3d5;">13:52:</div>
<div class="a t" style="left:1244.4px;top:596.70px;line-height:32px;font-size:22.6px;color:#d2d3d5;letter-spacing:-0.890px;-webkit-text-stroke:0.15px #d2d3d5;">11.666</div>
<div class="a t m" style="left:1338.3px;top:598.20px;line-height:31px;font-size:22px;color:#d2d3d5;letter-spacing:0.118px;-webkit-text-stroke:0.25px #d2d3d5;">Convert conversion successful</div>
<div class="a" style="left:1032px;top:647px;width:6px;height:32px;background:#4759c8;border-radius:3px;"></div>
<div class="a t" style="left:1056.0px;top:647.90px;line-height:32px;font-size:22.6px;color:#d2d3d5;letter-spacing:0.632px;-webkit-text-stroke:0.15px #d2d3d5;">2026-01-23</div>
<div class="a t" style="left:1183.6px;top:647.90px;line-height:32px;font-size:22.6px;color:#d2d3d5;letter-spacing:-0.507px;-webkit-text-stroke:0.15px #d2d3d5;">13:52:</div>
<div class="a t" style="left:1244.4px;top:647.90px;line-height:32px;font-size:22.6px;color:#d2d3d5;letter-spacing:-1.110px;-webkit-text-stroke:0.15px #d2d3d5;">11.067</div>
<div class="a t m" style="left:1338.3px;top:649.40px;line-height:31px;font-size:22px;color:#d2d3d5;letter-spacing:0.118px;-webkit-text-stroke:0.25px #d2d3d5;">Receive ListRecommendations for product ids:[&#x27;6E92ZMYYFZ&#x27;, &#x27;LS4PSXUNUM&#x27;, &#x27;1YMWWN1N4O&#x27;, &#x27;L9ECAV7KIM&#x27;, &#x27;2ZYFJ3GM2N&#x27;]</div>
<div class="a" style="left:1032px;top:698px;width:6px;height:32px;background:#4759c8;border-radius:3px;"></div>
<div class="a t" style="left:1056.0px;top:699.10px;line-height:32px;font-size:22.6px;color:#d2d3d5;letter-spacing:0.632px;-webkit-text-stroke:0.15px #d2d3d5;">2026-01-23</div>
<div class="a t" style="left:1183.6px;top:699.10px;line-height:32px;font-size:22.6px;color:#d2d3d5;letter-spacing:-0.507px;-webkit-text-stroke:0.15px #d2d3d5;">13:52:</div>
<div class="a t" style="left:1244.4px;top:699.10px;line-height:32px;font-size:22.6px;color:#d2d3d5;letter-spacing:-0.265px;-webkit-text-stroke:0.15px #d2d3d5;">10.968</div>
<div class="a t m" style="left:1338.3px;top:700.60px;line-height:31px;font-size:22px;color:#d2d3d5;letter-spacing:0.118px;-webkit-text-stroke:0.25px #d2d3d5;">Receive ListRecommendations for product ids:[&#x27;1YMWWN1N4O&#x27;, &#x27;0PUK6V6EV0&#x27;, &#x27;2ZYFJ3GM2N&#x27;, &#x27;6E92ZMYYFZ&#x27;, &#x27;L9ECAV7KIM&#x27;]</div>
<div class="a" style="left:1032px;top:749px;width:6px;height:32px;background:#4759c8;border-radius:3px;"></div>
<div class="a t" style="left:1056.0px;top:750.30px;line-height:32px;font-size:22.6px;color:#d2d3d5;letter-spacing:0.632px;-webkit-text-stroke:0.15px #d2d3d5;">2026-01-23</div>
<div class="a t" style="left:1183.6px;top:750.30px;line-height:32px;font-size:22.6px;color:#d2d3d5;letter-spacing:-0.507px;-webkit-text-stroke:0.15px #d2d3d5;">13:52:</div>
<div class="a t" style="left:1244.4px;top:750.30px;line-height:32px;font-size:22.6px;color:#d2d3d5;letter-spacing:-0.265px;-webkit-text-stroke:0.15px #d2d3d5;">10.369</div>
<div class="a t m" style="left:1338.3px;top:751.80px;line-height:31px;font-size:22px;color:#d2d3d5;letter-spacing:0.118px;-webkit-text-stroke:0.25px #d2d3d5;">Receive ListRecommendations for product ids:[&#x27;1YMWWN1N4O&#x27;, &#x27;9SIQT8TOJO&#x27;, &#x27;2ZYFJ3GM2N&#x27;, &#x27;L9ECAV7KIM&#x27;, &#x27;OLJCESPC7Z&#x27;]</div>
<div class="a" style="left:1032px;top:800px;width:6px;height:32px;background:#4759c8;border-radius:3px;"></div>
<div class="a t" style="left:1056.0px;top:801.50px;line-height:32px;font-size:22.6px;color:#d2d3d5;letter-spacing:0.632px;-webkit-text-stroke:0.15px #d2d3d5;">2026-01-23</div>
<div class="a t" style="left:1183.6px;top:801.50px;line-height:32px;font-size:22.6px;color:#d2d3d5;letter-spacing:-0.507px;-webkit-text-stroke:0.15px #d2d3d5;">13:52:</div>
<div class="a t" style="left:1244.4px;top:801.50px;line-height:32px;font-size:22.6px;color:#d2d3d5;letter-spacing:-0.265px;-webkit-text-stroke:0.15px #d2d3d5;">09.619</div>
<div class="a t m" style="left:1338.3px;top:803.00px;line-height:31px;font-size:22px;color:#d2d3d5;letter-spacing:0.118px;-webkit-text-stroke:0.25px #d2d3d5;">GetSupportedCurrencies successful</div>
<div class="a" style="left:1032px;top:852px;width:6px;height:32px;background:#4759c8;border-radius:3px;"></div>
<div class="a t" style="left:1056.0px;top:852.70px;line-height:32px;font-size:22.6px;color:#d2d3d5;letter-spacing:0.632px;-webkit-text-stroke:0.15px #d2d3d5;">2026-01-23</div>
<div class="a t" style="left:1183.6px;top:852.70px;line-height:32px;font-size:22.6px;color:#d2d3d5;letter-spacing:-0.507px;-webkit-text-stroke:0.15px #d2d3d5;">13:52:</div>
<div class="a t" style="left:1244.4px;top:852.70px;line-height:32px;font-size:22.6px;color:#d2d3d5;letter-spacing:0.295px;-webkit-text-stroke:0.15px #d2d3d5;">08.762</div>
<div class="a t m" style="left:1338.3px;top:854.20px;line-height:31px;font-size:22px;color:#d2d3d5;letter-spacing:0.118px;-webkit-text-stroke:0.25px #d2d3d5;">[ProducerStateManager partition=__cluster_metadata-0] Wrote producer snapshot at offset 12632974 with 0 producer ids in 1 ms.</div>
<div class="a" style="left:1032px;top:903px;width:6px;height:32px;background:#4759c8;border-radius:3px;"></div>
<div class="a t" style="left:1056.0px;top:903.90px;line-height:32px;font-size:22.6px;color:#d2d3d5;letter-spacing:0.632px;-webkit-text-stroke:0.15px #d2d3d5;">2026-01-23</div>
<div class="a t" style="left:1183.6px;top:903.90px;line-height:32px;font-size:22.6px;color:#d2d3d5;letter-spacing:-0.507px;-webkit-text-stroke:0.15px #d2d3d5;">13:52:</div>
<div class="a t" style="left:1244.4px;top:903.90px;line-height:32px;font-size:22.6px;color:#d2d3d5;letter-spacing:0.295px;-webkit-text-stroke:0.15px #d2d3d5;">08.762</div>
<div class="a t m" style="left:1338.3px;top:905.40px;line-height:31px;font-size:22px;color:#d2d3d5;letter-spacing:0.118px;-webkit-text-stroke:0.25px #d2d3d5;">[LocalLog partition=__cluster_metadata-0, dir=/tmp/kafka-logs] Rolled new log segment at offset 12632974 in 0 ms.</div>
<div class="a" style="left:1032px;top:954px;width:6px;height:32px;background:#98a8f8;border-radius:3px;"></div>
<div class="a t" style="left:1056.0px;top:955.10px;line-height:32px;font-size:22.6px;color:#d2d3d5;letter-spacing:0.632px;-webkit-text-stroke:0.15px #d2d3d5;">2026-01-23</div>
<div class="a t" style="left:1183.6px;top:955.10px;line-height:32px;font-size:22.6px;color:#d2d3d5;letter-spacing:-0.507px;-webkit-text-stroke:0.15px #d2d3d5;">13:52:</div>
<div class="a t" style="left:1244.4px;top:955.10px;line-height:32px;font-size:22.6px;color:#d2d3d5;letter-spacing:-0.525px;-webkit-text-stroke:0.15px #d2d3d5;">08.617</div>
<div class="a t m" style="left:1338.3px;top:956.60px;line-height:31px;font-size:22px;color:#d2d3d5;letter-spacing:0.118px;-webkit-text-stroke:0.25px #d2d3d5;">GetCartAsync called with userId={userId}</div>
<div class="a" style="left:1032px;top:1005px;width:6px;height:32px;background:#4759c8;border-radius:3px;"></div>
<div class="a t" style="left:1056.0px;top:1006.30px;line-height:32px;font-size:22.6px;color:#d2d3d5;letter-spacing:0.632px;-webkit-text-stroke:0.15px #d2d3d5;">2026-01-23</div>
<div class="a t" style="left:1183.6px;top:1006.30px;line-height:32px;font-size:22.6px;color:#d2d3d5;letter-spacing:-0.507px;-webkit-text-stroke:0.15px #d2d3d5;">13:52:</div>
<div class="a t" style="left:1244.4px;top:1006.30px;line-height:32px;font-size:22.6px;color:#d2d3d5;letter-spacing:-0.565px;-webkit-text-stroke:0.15px #d2d3d5;">08.517</div>
<div class="a t m" style="left:1338.3px;top:1007.80px;line-height:31px;font-size:22px;color:#d2d3d5;letter-spacing:0.118px;-webkit-text-stroke:0.25px #d2d3d5;">GetSupportedCurrencies successful</div>
<div class="a" style="left:1032px;top:1056px;width:6px;height:32px;background:#98a8f8;border-radius:3px;"></div>
<div class="a t" style="left:1056.0px;top:1057.50px;line-height:32px;font-size:22.6px;color:#d2d3d5;letter-spacing:0.632px;-webkit-text-stroke:0.15px #d2d3d5;">2026-01-23</div>
<div class="a t" style="left:1183.6px;top:1057.50px;line-height:32px;font-size:22.6px;color:#d2d3d5;letter-spacing:-0.507px;-webkit-text-stroke:0.15px #d2d3d5;">13:52:</div>
<div class="a t" style="left:1244.4px;top:1057.50px;line-height:32px;font-size:22.6px;color:#d2d3d5;letter-spacing:0.715px;-webkit-text-stroke:0.15px #d2d3d5;">05.424</div>
<div class="a t m" style="left:1338.3px;top:1059.00px;line-height:31px;font-size:22px;color:#d2d3d5;letter-spacing:0.118px;-webkit-text-stroke:0.25px #d2d3d5;">GetCartAsync called with userId={userId}</div>
<div class="a" style="left:1032px;top:1108px;width:6px;height:32px;background:#98a8f8;border-radius:3px;"></div>
<div class="a t" style="left:1056.0px;top:1108.70px;line-height:32px;font-size:22.6px;color:#d2d3d5;letter-spacing:0.632px;-webkit-text-stroke:0.15px #d2d3d5;">2026-01-23</div>
<div class="a t" style="left:1183.6px;top:1108.70px;line-height:32px;font-size:22.6px;color:#d2d3d5;letter-spacing:-0.507px;-webkit-text-stroke:0.15px #d2d3d5;">13:52:</div>
<div class="a t" style="left:1244.4px;top:1108.70px;line-height:32px;font-size:22.6px;color:#d2d3d5;letter-spacing:-0.565px;-webkit-text-stroke:0.15px #d2d3d5;">05.317</div>
<div class="a t m" style="left:1338.3px;top:1110.20px;line-height:31px;font-size:22px;color:#d2d3d5;letter-spacing:0.118px;-webkit-text-stroke:0.25px #d2d3d5;">GetCartAsync called with userId={userId}</div>
<div class="a" style="left:1032px;top:1159px;width:6px;height:32px;background:#4759c8;border-radius:3px;"></div>
<div class="a t" style="left:1056.0px;top:1159.90px;line-height:32px;font-size:22.6px;color:#d2d3d5;letter-spacing:0.632px;-webkit-text-stroke:0.15px #d2d3d5;">2026-01-23</div>
<div class="a t" style="left:1183.6px;top:1159.90px;line-height:32px;font-size:22.6px;color:#d2d3d5;letter-spacing:-0.507px;-webkit-text-stroke:0.15px #d2d3d5;">13:52:</div>
<div class="a t" style="left:1244.4px;top:1159.90px;line-height:32px;font-size:22.6px;color:#d2d3d5;letter-spacing:-0.265px;-webkit-text-stroke:0.15px #d2d3d5;">05.016</div>
<div class="a t m" style="left:1338.3px;top:1161.40px;line-height:31px;font-size:22px;color:#d2d3d5;letter-spacing:0.118px;-webkit-text-stroke:0.25px #d2d3d5;">GetSupportedCurrencies successful</div>
<div class="a" style="left:1032px;top:1210px;width:6px;height:32px;background:#98a8f8;border-radius:3px;"></div>
<div class="a t" style="left:1056.0px;top:1211.10px;line-height:32px;font-size:22.6px;color:#d2d3d5;letter-spacing:0.632px;-webkit-text-stroke:0.15px #d2d3d5;">2026-01-23</div>
<div class="a t" style="left:1183.6px;top:1211.10px;line-height:32px;font-size:22.6px;color:#d2d3d5;letter-spacing:-0.507px;-webkit-text-stroke:0.15px #d2d3d5;">13:52:</div>
<div class="a t" style="left:1244.4px;top:1211.10px;line-height:32px;font-size:22.6px;color:#d2d3d5;letter-spacing:-0.265px;-webkit-text-stroke:0.15px #d2d3d5;">05.016</div>
<div class="a t m" style="left:1338.3px;top:1212.60px;line-height:31px;font-size:22px;color:#d2d3d5;letter-spacing:0.118px;-webkit-text-stroke:0.25px #d2d3d5;">GetCartAsync called with userId={userId}</div>
<div class="a" style="left:1032px;top:1261px;width:6px;height:32px;background:#98a8f8;border-radius:3px;"></div>
<div class="a t" style="left:1056.0px;top:1262.30px;line-height:32px;font-size:22.6px;color:#d2d3d5;letter-spacing:0.632px;-webkit-text-stroke:0.15px #d2d3d5;">2026-01-23</div>
<div class="a t" style="left:1183.6px;top:1262.30px;line-height:32px;font-size:22.6px;color:#d2d3d5;letter-spacing:-0.507px;-webkit-text-stroke:0.15px #d2d3d5;">13:52:</div>
<div class="a t" style="left:1244.4px;top:1262.30px;line-height:32px;font-size:22.6px;color:#d2d3d5;letter-spacing:0.695px;-webkit-text-stroke:0.15px #d2d3d5;">04.920</div>
<div class="a t m" style="left:1338.3px;top:1263.80px;line-height:31px;font-size:22px;color:#d2d3d5;letter-spacing:0.118px;-webkit-text-stroke:0.25px #d2d3d5;">GetCartAsync called with userId={userId}</div>
<div class="a" style="left:1032px;top:1312px;width:6px;height:32px;background:#4759c8;border-radius:3px;"></div>
<div class="a t" style="left:1056.0px;top:1313.50px;line-height:32px;font-size:22.6px;color:#d2d3d5;letter-spacing:0.632px;-webkit-text-stroke:0.15px #d2d3d5;">2026-01-23</div>
<div class="a t" style="left:1183.6px;top:1313.50px;line-height:32px;font-size:22.6px;color:#d2d3d5;letter-spacing:-0.507px;-webkit-text-stroke:0.15px #d2d3d5;">13:52:</div>
<div class="a t" style="left:1244.4px;top:1313.50px;line-height:32px;font-size:22.6px;color:#d2d3d5;letter-spacing:-0.425px;-webkit-text-stroke:0.15px #d2d3d5;">04.716</div>
<div class="a t m" style="left:1338.3px;top:1315.00px;line-height:31px;font-size:22px;color:#d2d3d5;letter-spacing:0.118px;-webkit-text-stroke:0.25px #d2d3d5;">GetSupportedCurrencies successful</div>
<div class="a" style="left:1032px;top:1364px;width:6px;height:32px;background:#4759c8;border-radius:3px;"></div>
<div class="a t" style="left:1056.0px;top:1364.70px;line-height:32px;font-size:22.6px;color:#d2d3d5;letter-spacing:0.632px;-webkit-text-stroke:0.15px #d2d3d5;">2026-01-23</div>
<div class="a t" style="left:1183.6px;top:1364.70px;line-height:32px;font-size:22.6px;color:#d2d3d5;letter-spacing:-0.507px;-webkit-text-stroke:0.15px #d2d3d5;">13:52:</div>
<div class="a t" style="left:1244.4px;top:1364.70px;line-height:32px;font-size:22.6px;color:#d2d3d5;letter-spacing:0.355px;-webkit-text-stroke:0.15px #d2d3d5;">04.527</div>
<div class="a t m" style="left:1338.3px;top:1366.20px;line-height:31px;font-size:22px;color:#d2d3d5;letter-spacing:0.118px;-webkit-text-stroke:0.25px #d2d3d5;">Receive ListRecommendations for product ids:[&#x27;66VCHSJNUP&#x27;, &#x27;0PUK6V6EV0&#x27;, &#x27;OLJCESPC7Z&#x27;, &#x27;9SIQT8TOJO&#x27;, &#x27;1YMWWN1N4O&#x27;]</div>
<div class="a" style="left:1032px;top:1415px;width:6px;height:32px;background:#4759c8;border-radius:3px;"></div>
<div class="a t" style="left:1056.0px;top:1415.90px;line-height:32px;font-size:22.6px;color:#d2d3d5;letter-spacing:0.632px;-webkit-text-stroke:0.15px #d2d3d5;">2026-01-23</div>
<div class="a t" style="left:1183.6px;top:1415.90px;line-height:32px;font-size:22.6px;color:#d2d3d5;letter-spacing:-0.507px;-webkit-text-stroke:0.15px #d2d3d5;">13:52:</div>
<div class="a t" style="left:1244.4px;top:1415.90px;line-height:32px;font-size:22.6px;color:#d2d3d5;letter-spacing:0.815px;-webkit-text-stroke:0.15px #d2d3d5;">04.354</div>
<div class="a t m" style="left:1338.3px;top:1417.40px;line-height:31px;font-size:22px;color:#d2d3d5;letter-spacing:0.118px;-webkit-text-stroke:0.25px #d2d3d5;">Consumed record with orderId: 993bb1b8-f834-11f0-b91d-0a7a4c65373b, and updated total count to: 309196</div>
<div class="a" style="left:1032px;top:1466px;width:6px;height:32px;background:#98a8f8;border-radius:3px;"></div>
<div class="a t" style="left:1056.0px;top:1467.10px;line-height:32px;font-size:22.6px;color:#d2d3d5;letter-spacing:0.632px;-webkit-text-stroke:0.15px #d2d3d5;">2026-01-23</div>
<div class="a t" style="left:1183.6px;top:1467.10px;line-height:32px;font-size:22.6px;color:#d2d3d5;letter-spacing:-0.507px;-webkit-text-stroke:0.15px #d2d3d5;">13:52:</div>
<div class="a t" style="left:1244.4px;top:1467.10px;line-height:32px;font-size:22.6px;color:#d2d3d5;letter-spacing:0.395px;-webkit-text-stroke:0.15px #d2d3d5;">04.278</div>
<div class="a t m" style="left:1338.3px;top:1468.60px;line-height:31px;font-size:22px;color:#d2d3d5;letter-spacing:0.118px;-webkit-text-stroke:0.25px #d2d3d5;">EmptyCartAsync called with userId={userId}</div>
<div class="a" style="left:1032px;top:1517px;width:6px;height:32px;background:#4759c8;border-radius:3px;"></div>
<div class="a t" style="left:1056.0px;top:1518.30px;line-height:32px;font-size:22.6px;color:#d2d3d5;letter-spacing:0.632px;-webkit-text-stroke:0.15px #d2d3d5;">2026-01-23</div>
<div class="a t" style="left:1183.6px;top:1518.30px;line-height:32px;font-size:22.6px;color:#d2d3d5;letter-spacing:-0.507px;-webkit-text-stroke:0.15px #d2d3d5;">13:52:</div>
<div class="a t" style="left:1244.4px;top:1518.30px;line-height:32px;font-size:22.6px;color:#d2d3d5;letter-spacing:-0.225px;-webkit-text-stroke:0.15px #d2d3d5;">04.201</div>
<div class="a t m" style="left:1338.3px;top:1519.80px;line-height:31px;font-size:22px;color:#d2d3d5;letter-spacing:0.118px;-webkit-text-stroke:0.25px #d2d3d5;">Convert conversion successful</div>
<div class="a" style="left:1032px;top:1568px;width:6px;height:32px;background:#4759c8;border-radius:3px;"></div>
<div class="a t" style="left:1056.0px;top:1569.50px;line-height:32px;font-size:22.6px;color:#d2d3d5;letter-spacing:0.632px;-webkit-text-stroke:0.15px #d2d3d5;">2026-01-23</div>
<div class="a t" style="left:1183.6px;top:1569.50px;line-height:32px;font-size:22.6px;color:#d2d3d5;letter-spacing:-0.507px;-webkit-text-stroke:0.15px #d2d3d5;">13:52:</div>
<div class="a t" style="left:1244.4px;top:1569.50px;line-height:32px;font-size:22.6px;color:#d2d3d5;letter-spacing:-0.065px;-webkit-text-stroke:0.15px #d2d3d5;">04.194</div>
<div class="a t m" style="left:1338.3px;top:1571.00px;line-height:31px;font-size:22px;color:#d2d3d5;letter-spacing:0.118px;-webkit-text-stroke:0.25px #d2d3d5;">Calculated quote</div>
<div class="a" style="left:1032px;top:1620px;width:6px;height:32px;background:#4759c8;border-radius:3px;"></div>
<div class="a t" style="left:1056.0px;top:1620.70px;line-height:32px;font-size:22.6px;color:#d2d3d5;letter-spacing:0.632px;-webkit-text-stroke:0.15px #d2d3d5;">2026-01-23</div>
<div class="a t" style="left:1183.6px;top:1620.70px;line-height:32px;font-size:22.6px;color:#d2d3d5;letter-spacing:-0.507px;-webkit-text-stroke:0.15px #d2d3d5;">13:52:</div>
<div class="a t" style="left:1244.4px;top:1620.70px;line-height:32px;font-size:22.6px;color:#d2d3d5;letter-spacing:-0.265px;-webkit-text-stroke:0.15px #d2d3d5;">04.162</div>
<div class="a t m" style="left:1338.3px;top:1622.20px;line-height:31px;font-size:22px;color:#d2d3d5;letter-spacing:0.118px;-webkit-text-stroke:0.25px #d2d3d5;">Convert conversion successful</div>
<div class="a" style="left:1032px;top:1671px;width:6px;height:32px;background:#98a8f8;border-radius:3px;"></div>
<div class="a t" style="left:1056.0px;top:1671.90px;line-height:32px;font-size:22.6px;color:#d2d3d5;letter-spacing:0.632px;-webkit-text-stroke:0.15px #d2d3d5;">2026-01-23</div>
<div class="a t" style="left:1183.6px;top:1671.90px;line-height:32px;font-size:22.6px;color:#d2d3d5;letter-spacing:-0.507px;-webkit-text-stroke:0.15px #d2d3d5;">13:52:</div>
<div class="a t" style="left:1244.4px;top:1671.90px;line-height:32px;font-size:22.6px;color:#d2d3d5;letter-spacing:-0.425px;-webkit-text-stroke:0.15px #d2d3d5;">04.137</div>
<div class="a t m" style="left:1338.3px;top:1673.40px;line-height:31px;font-size:22px;color:#d2d3d5;letter-spacing:0.118px;-webkit-text-stroke:0.25px #d2d3d5;">GetCartAsync called with userId={userId}</div>
<div class="a" style="left:1032px;top:1722px;width:6px;height:32px;background:#4759c8;border-radius:3px;"></div>
<div class="a t" style="left:1056.0px;top:1723.10px;line-height:32px;font-size:22.6px;color:#d2d3d5;letter-spacing:0.632px;-webkit-text-stroke:0.15px #d2d3d5;">2026-01-23</div>
<div class="a t" style="left:1183.6px;top:1723.10px;line-height:32px;font-size:22.6px;color:#d2d3d5;letter-spacing:-0.507px;-webkit-text-stroke:0.15px #d2d3d5;">13:52:</div>
<div class="a t" style="left:1244.4px;top:1723.10px;line-height:32px;font-size:22.6px;color:#d2d3d5;letter-spacing:0.835px;-webkit-text-stroke:0.15px #d2d3d5;">04.030</div>
<div class="a t m" style="left:1338.3px;top:1724.60px;line-height:31px;font-size:22px;color:#d2d3d5;letter-spacing:0.118px;-webkit-text-stroke:0.25px #d2d3d5;">Convert conversion successful</div>
<div class="a" style="left:3584px;top:413px;width:16px;height:482px;background:#b0b0b8;border-radius:8px;"></div>
<div class="a" style="left:3598px;top:0px;width:2px;height:1760px;background:#3c3c3f;"></div>
<div class="a" style="left:3598px;top:420px;width:2px;height:468px;background:#c6c6ca;"></div>
</div><script>(function(){var w=window.innerWidth||3600;var k=w/3600;if(k>0&&Math.abs(k-1)>0.001){var r=document.getElementById("root");r.style.transformOrigin="0 0";r.style.transform="scale("+k+")";}})();</script></body></html>
